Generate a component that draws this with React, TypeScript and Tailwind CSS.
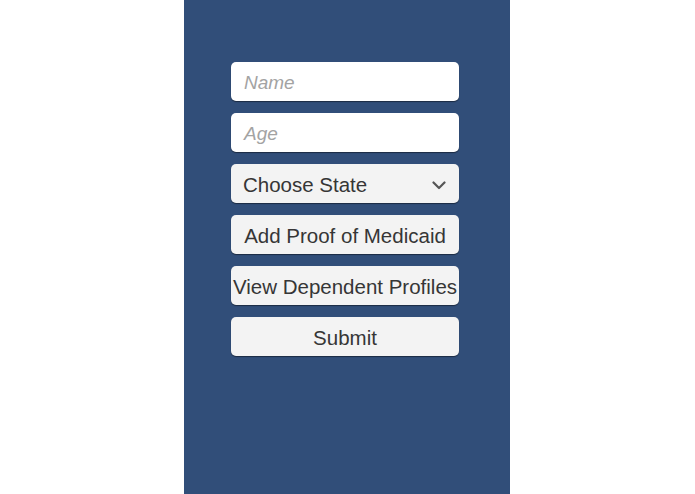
import React from "react";

const font = { fontFamily: '"Liberation Sans", Arial, sans-serif' };

function Field({ children, white, className = "" }: { children: React.ReactNode; white?: boolean; className?: string }) {
  return (
    <div
      className={`h-[39px] w-[228px] rounded-[5px] flex items-center pt-[3px] shadow-[0_1px_1px_rgba(0,0,0,0.45)] ${white ? "bg-white" : "bg-[#f3f3f3]"} ${className}`}
    >
      {children}
    </div>
  );
}

export default function App() {
  return (
    <div className="w-[695px] h-[494px] bg-white" style={font}>
      <div className="w-[326px] h-[494px] bg-[#314e79] ml-[184px] flex flex-col items-start pl-[47px] pt-[62px] gap-[12px]">
        <Field white className="px-[13px]">
          <span className="text-[19px] italic text-[#a3a3a3]">Name</span>
        </Field>
        <Field white className="px-[13px]">
          <span className="text-[19px] italic text-[#a3a3a3]">Age</span>
        </Field>
        <Field className="pl-[12px] pr-[13px] justify-between">
          <span className="text-[20.5px] text-[#363636]">Choose State</span>
          <svg width="14" height="9" viewBox="0 0 14 9" fill="none">
            <path d="M1.5 1.5 L7 7 L12.5 1.5" stroke="#555555" strokeWidth="2.2" strokeLinecap="round" strokeLinejoin="round" />
          </svg>
        </Field>
        <Field className="justify-center">
          <span className="text-[20.5px] text-[#363636] whitespace-nowrap">Add Proof of Medicaid</span>
        </Field>
        <Field className="justify-center overflow-visible">
          <span className="text-[20.5px] text-[#363636] whitespace-nowrap">View Dependent Profiles</span>
        </Field>
        <Field className="justify-center">
          <span className="text-[20.5px] text-[#363636]">Submit</span>
        </Field>
      </div>
    </div>
  );
}
